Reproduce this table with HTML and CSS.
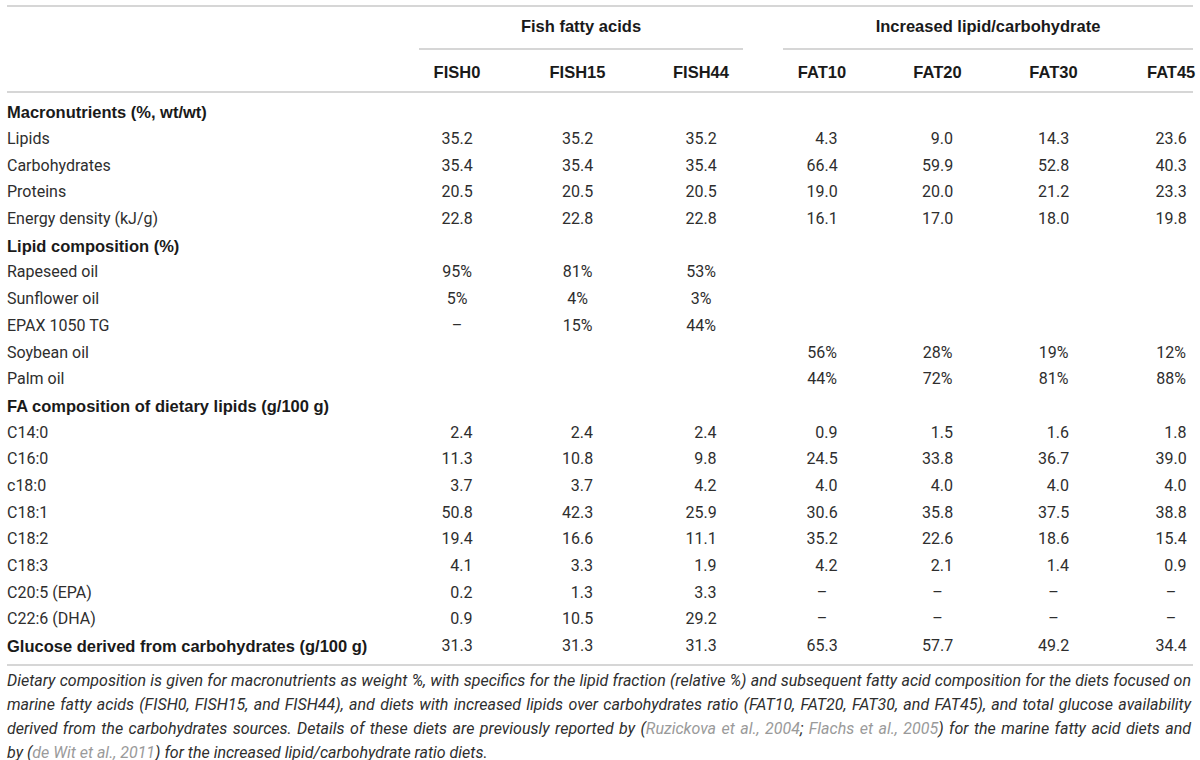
FILE: index.html
```html
<!DOCTYPE html>
<html lang="en">
<head>
<meta charset="utf-8">
<title>Diet composition table</title>
<link rel="stylesheet" href="styles.css">
</head>
<body>
<table class="tbl">
  <colgroup>
    <col class="c-label">
    <col class="c-f0"><col class="c-f15"><col class="c-f44">
    <col class="c-a10"><col class="c-a20"><col class="c-a30"><col class="c-a45">
  </colgroup>
  <thead>
    <tr class="grp">
      <th></th>
      <th colspan="3"><div class="grp-fish">Fish fatty acids</div></th>
      <th colspan="4"><div class="grp-fat">Increased lipid/carbohydrate</div></th>
    </tr>
    <tr class="cols">
      <th></th>
      <th>FISH0</th><th>FISH15</th><th>FISH44</th>
      <th>FAT10</th><th>FAT20</th><th>FAT30</th><th class="last">FAT45</th>
    </tr>
  </thead>
  <tbody>
    <tr class="sec first"><td>Macronutrients (%, wt/wt)</td><td></td><td></td><td></td><td></td><td></td><td></td><td class="last"></td></tr>
    <tr><td>Lipids</td><td><span class="n">35.2</span></td><td><span class="n">35.2</span></td><td><span class="n">35.2</span></td><td><span class="n">4.3</span></td><td><span class="n">9.0</span></td><td><span class="n">14.3</span></td><td class="last"><span class="n">23.6</span></td></tr>
    <tr><td>Carbohydrates</td><td><span class="n">35.4</span></td><td><span class="n">35.4</span></td><td><span class="n">35.4</span></td><td><span class="n">66.4</span></td><td><span class="n">59.9</span></td><td><span class="n">52.8</span></td><td class="last"><span class="n">40.3</span></td></tr>
    <tr><td>Proteins</td><td><span class="n">20.5</span></td><td><span class="n">20.5</span></td><td><span class="n">20.5</span></td><td><span class="n">19.0</span></td><td><span class="n">20.0</span></td><td><span class="n">21.2</span></td><td class="last"><span class="n">23.3</span></td></tr>
    <tr><td>Energy density (kJ/g)</td><td><span class="n">22.8</span></td><td><span class="n">22.8</span></td><td><span class="n">22.8</span></td><td><span class="n">16.1</span></td><td><span class="n">17.0</span></td><td><span class="n">18.0</span></td><td class="last"><span class="n">19.8</span></td></tr>
    <tr class="sec"><td>Lipid composition (%)</td><td></td><td></td><td></td><td></td><td></td><td></td><td class="last"></td></tr>
    <tr><td>Rapeseed oil</td><td>95%</td><td>81%</td><td>53%</td><td></td><td></td><td></td><td class="last"></td></tr>
    <tr><td>Sunflower oil</td><td>5%</td><td>4%</td><td>3%</td><td></td><td></td><td></td><td class="last"></td></tr>
    <tr><td>EPAX 1050 TG</td><td>–</td><td>15%</td><td>44%</td><td></td><td></td><td></td><td class="last"></td></tr>
    <tr><td>Soybean oil</td><td></td><td></td><td></td><td>56%</td><td>28%</td><td>19%</td><td class="last">12%</td></tr>
    <tr><td>Palm oil</td><td></td><td></td><td></td><td>44%</td><td>72%</td><td>81%</td><td class="last">88%</td></tr>
    <tr class="sec"><td>FA composition of dietary lipids (g/100 g)</td><td></td><td></td><td></td><td></td><td></td><td></td><td class="last"></td></tr>
    <tr><td>C14:0</td><td><span class="n">2.4</span></td><td><span class="n">2.4</span></td><td><span class="n">2.4</span></td><td><span class="n">0.9</span></td><td><span class="n">1.5</span></td><td><span class="n">1.6</span></td><td class="last"><span class="n">1.8</span></td></tr>
    <tr><td>C16:0</td><td><span class="n">11.3</span></td><td><span class="n">10.8</span></td><td><span class="n">9.8</span></td><td><span class="n">24.5</span></td><td><span class="n">33.8</span></td><td><span class="n">36.7</span></td><td class="last"><span class="n">39.0</span></td></tr>
    <tr><td>c18:0</td><td><span class="n">3.7</span></td><td><span class="n">3.7</span></td><td><span class="n">4.2</span></td><td><span class="n">4.0</span></td><td><span class="n">4.0</span></td><td><span class="n">4.0</span></td><td class="last"><span class="n">4.0</span></td></tr>
    <tr><td>C18:1</td><td><span class="n">50.8</span></td><td><span class="n">42.3</span></td><td><span class="n">25.9</span></td><td><span class="n">30.6</span></td><td><span class="n">35.8</span></td><td><span class="n">37.5</span></td><td class="last"><span class="n">38.8</span></td></tr>
    <tr><td>C18:2</td><td><span class="n">19.4</span></td><td><span class="n">16.6</span></td><td><span class="n">11.1</span></td><td><span class="n">35.2</span></td><td><span class="n">22.6</span></td><td><span class="n">18.6</span></td><td class="last"><span class="n">15.4</span></td></tr>
    <tr><td>C18:3</td><td><span class="n">4.1</span></td><td><span class="n">3.3</span></td><td><span class="n">1.9</span></td><td><span class="n">4.2</span></td><td><span class="n">2.1</span></td><td><span class="n">1.4</span></td><td class="last"><span class="n">0.9</span></td></tr>
    <tr><td>C20:5 (EPA)</td><td><span class="n">0.2</span></td><td><span class="n">1.3</span></td><td><span class="n">3.3</span></td><td>–</td><td>–</td><td>–</td><td class="last">–</td></tr>
    <tr><td>C22:6 (DHA)</td><td><span class="n">0.9</span></td><td><span class="n">10.5</span></td><td><span class="n">29.2</span></td><td>–</td><td>–</td><td>–</td><td class="last">–</td></tr>
    <tr class="sec final"><td>Glucose derived from carbohydrates (g/100 g)</td><td><span class="n">31.3</span></td><td><span class="n">31.3</span></td><td><span class="n">31.3</span></td><td><span class="n">65.3</span></td><td><span class="n">57.7</span></td><td><span class="n">49.2</span></td><td class="last"><span class="n">34.4</span></td></tr>
  </tbody>
</table>
<p class="caption"><span class="ln">Dietary composition is given for macronutrients as weight %, with specifics for the lipid fraction (relative %) and subsequent fatty acid composition for the diets focused on</span><span class="ln">marine fatty acids (FISH0, FISH15, and FISH44), and diets with increased lipids over carbohydrates ratio (FAT10, FAT20, FAT30, and FAT45), and total glucose availability</span><span class="ln">derived from the carbohydrates sources. Details of these diets are previously reported by (<a class="ref" href="#">Ruzickova et al., 2004</a>; <a class="ref" href="#">Flachs et al., 2005</a>) for the marine fatty acid diets and</span><span class="ln-end">by (<a class="ref" href="#">de Wit et al., 2011</a>) for the increased lipid/carbohydrate ratio diets.</span></p>
</body>
</html>
```

FILE: styles.css
```css
html, body {
  margin: 0;
  padding: 0;
  background: #ffffff;
}

body {
  padding: 5px 7px 0 7px;
  font-family: Roboto, "Liberation Sans", Arial, sans-serif;
  color: #2e2e2e;
}

.tbl {
  width: 1186px;
  table-layout: fixed;
  border-collapse: collapse;
  border-top: 2px solid #d6d6d6;
  font-size: 16px;
}

.c-label { width: 390px; }
.c-f0 { width: 120px; }
.c-f15 { width: 121px; }
.c-f44 { width: 126px; }
.c-a10 { width: 116px; }
.c-a20 { width: 115px; }
.c-a30 { width: 117px; }
.c-a45 { width: 81px; }

.tbl th {
  font-family: "Liberation Sans", Arial, sans-serif;
  font-size: 16.5px;
  font-weight: 700;
  color: #1a1a1a;
  padding: 0;
  line-height: 20px;
  text-align: center;
}

.grp th {
  padding-top: 9px;
}

.grp-fish,
.grp-fat {
  padding-bottom: 12px;
  border-bottom: 2px solid #d6d6d6;
}

.grp-fish {
  margin: 0 21px 0 22px;
}

.grp-fat {
  margin: 0 0 0 19px;
}

.cols th {
  padding-top: 12px;
  padding-bottom: 9px;
  border-bottom: 2px solid #d6d6d6;
}

.tbl td {
  padding: 0;
  height: 26.7px;
  line-height: 20px;
  text-align: center;
  white-space: nowrap;
  vertical-align: middle;
}

.tbl td:first-child {
  text-align: left;
}

.tbl .last {
  padding-left: 37px;
}

.tbl th.last {
  padding-left: 35px;
}

.sec td:first-child {
  font-family: "Liberation Sans", Arial, sans-serif;
  font-size: 16.5px;
  font-weight: 700;
  color: #1a1a1a;
}

.first td {
  padding-top: 6px;
  height: 26.7px;
}

.final td {
  padding-bottom: 5px;
  border-bottom: 2px solid #d6d6d6;
}

.n {
  display: inline-block;
  width: 31px;
  text-align: right;
}

.caption {
  width: 1184px;
  margin: 3px 0 0 0;
  font-size: 16px;
  line-height: 24px;
  font-style: italic;
  color: #2e2e2e;
}

.ln {
  display: block;
  white-space: nowrap;
  text-align: justify;
  text-align-last: justify;
}

.ln-end {
  display: block;
  white-space: nowrap;
}

.ref {
  color: #9a9a9a;
  text-decoration: none;
}
```
